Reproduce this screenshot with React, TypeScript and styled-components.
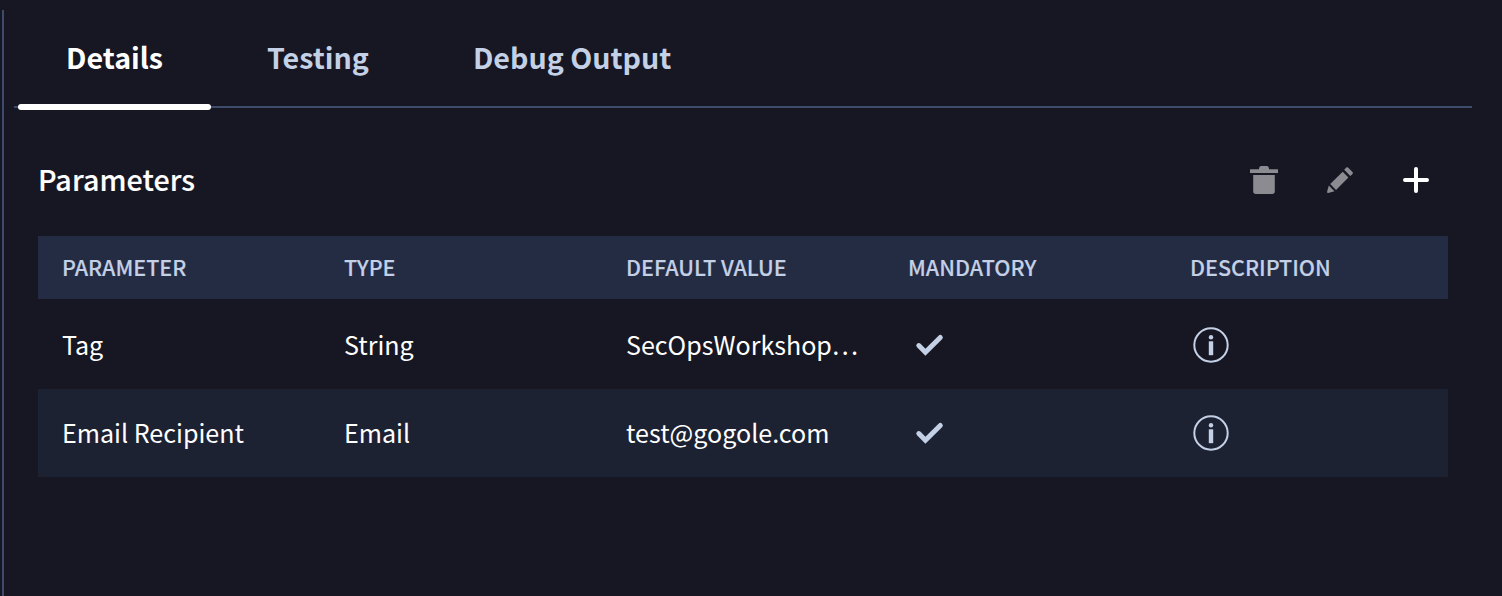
import React from "react";
import styled, { createGlobalStyle } from "styled-components";

const colors = {
  page: "#171723",
  line: "#3e4c6c",
  header: "#242c44",
  stripe: "#1d2233",
  muted: "#c3d0e5",
  text: "#ffffff",
  disabled: "#8b8b91",
};

const GlobalStyle = createGlobalStyle`
  * { box-sizing: border-box; }
  body {
    margin: 0;
    background: ${colors.page};
    color: ${colors.text};
    font-family: "Noto Sans CJK KR", "Noto Sans CJK SC", "Noto Sans", sans-serif;
  }
  button { font: inherit; color: inherit; background: none; border: 0; padding: 0; }
`;

const Panel = styled.main`
  height: 586px;
  margin: 10px 0 0 2px;
  border-left: 2px solid ${colors.line};
  padding: 0 30px 0 10px;
  overflow: hidden;
`;

const TabBar = styled.nav`
  display: flex;
  height: 98px;
  padding-left: 4px;
  border-bottom: 2px solid ${colors.line};
`;

const Tab = styled.button<{ $active?: boolean }>`
  position: relative;
  height: 96px;
  padding: 0 48px 2px;
  margin-right: 8px;
  font-size: 28.65px;
  font-weight: 700;
  line-height: 94px;
  white-space: nowrap;
  color: ${(p) => (p.$active ? colors.text : colors.muted)};
  &::after {
    content: "";
    display: ${(p) => (p.$active ? "block" : "none")};
    position: absolute;
    left: 0;
    right: 0;
    bottom: -4px;
    height: 6px;
    border-radius: 3px;
    background: ${colors.text};
  }
`;

const Section = styled.section`
  padding: 37px 24px 0;
`;

const SectionHead = styled.header`
  display: flex;
  align-items: center;
  justify-content: space-between;
  height: 70px;
  margin-bottom: 21px;
  padding-right: 16px;
`;

const Title = styled.h2`
  margin: 0;
  padding-bottom: 2px;
  font-size: 28.65px;
  font-weight: 500;
  letter-spacing: 0.08px;
  line-height: 68px;
  -webkit-text-stroke: 0.15px currentColor;
`;

const Actions = styled.div`
  display: flex;
  gap: 44px;
`;

const IconButton = styled.button<{ $disabled?: boolean }>`
  display: flex;
  width: 32px;
  height: 32px;
  color: ${(p) => (p.$disabled ? colors.disabled : colors.text)};
`;

const Table = styled.div`
  width: 1410px;
`;

const Row = styled.div<{ $striped?: boolean }>`
  display: grid;
  grid-template-columns: repeat(5, 282px);
  align-items: center;
  height: 88px;
  background: ${(p) => (p.$striped ? colors.stripe : "transparent")};
`;

const HeaderRow = styled(Row)`
  height: 63px;
  margin-bottom: 2px;
  background: ${colors.header};
`;

const HeaderCell = styled.div`
  padding: 0 0 2px 24px;
  font-size: 21.5px;
  font-weight: 500;
  line-height: 60px;
  white-space: nowrap;
  color: ${colors.muted};
  -webkit-text-stroke: 0.15px currentColor;
`;

const Cell = styled.div`
  display: flex;
  align-items: center;
  padding: 0 0 2px 24px;
  font-size: 25.07px;
  line-height: 86px;
  height: 88px;
  white-space: nowrap;
`;

const IconCell = styled(Cell)`
  padding-bottom: 0;
`;

const CellIcon = styled.svg`
  display: block;
  width: 42px;
  height: 42px;
  color: ${colors.muted};
`;

const TrashIcon = () => (
  <svg width="32" height="32" viewBox="0 0 32 32" fill="currentColor">
    <path d="M2 5.3h9V4.6Q11.2 2 13 2h6Q20.800 2 21 4.600V5.300h9V9H2Z" />
    <path d="M5.200 11h21.600v16.300q0 2.700-2.700 2.700H7.900q-2.700 0-2.700-2.700Z" />
  </svg>
);

const PencilIcon = () => (
  <svg width="32" height="32" viewBox="0 0 32 32" fill="currentColor">
    <path d="M20.200 5.800 22.200 3.600Q23.100 2.700 24 3.600L28.500 8.100Q29.400 9 28.500 9.900L26.300 12Z" />
    <path d="M18.700 7.700 24.400 13.500 12 25.900 6.200 20.100Z" />
    <path d="M4.800 21.600 10.500 27.200 4.200 28.900Q2.800 29.200 3.100 27.800Z" />
  </svg>
);

const PlusIcon = () => (
  <svg width="32" height="32" viewBox="0 0 32 32" stroke="currentColor" strokeWidth="4" strokeLinecap="round">
    <path d="M16 5v22M5 16h22" />
  </svg>
);

const CheckMark = () => (
  <CellIcon viewBox="0 0 42 42" fill="none" aria-label="Yes">
    <path d="M10.800 21.600 17.400 28.200 32.300 13.400" stroke="currentColor" strokeWidth="5" strokeLinecap="round" />
  </CellIcon>
);

const InfoMark = () => (
  <CellIcon viewBox="0 0 42 42" fill="none" aria-label="Information">
    <circle cx="21" cy="21" r="16.700" stroke="currentColor" strokeWidth="2" />
    <circle cx="21" cy="13.300" r="2.200" fill="currentColor" />
    <path d="M18.800 17.300h4.400v13.900h-4.400z" fill="currentColor" />
  </CellIcon>
);

const tabs = ["Details", "Testing", "Debug Output"];
const columns = ["PARAMETER", "TYPE", "DEFAULT VALUE", "MANDATORY", "DESCRIPTION"];
const parameters = [
  { name: "Tag", type: "String", value: "SecOpsWorkshop…" },
  { name: "Email Recipient", type: "Email", value: "test@gogole.com" },
];

export default function App() {
  return (
    <>
      <GlobalStyle />
      <Panel>
        <TabBar>
          {tabs.map((label, i) => (
            <Tab key={label} $active={i === 0}>{label}</Tab>
          ))}
        </TabBar>
        <Section>
          <SectionHead>
            <Title>Parameters</Title>
            <Actions>
              <IconButton $disabled aria-label="Delete"><TrashIcon /></IconButton>
              <IconButton $disabled aria-label="Edit"><PencilIcon /></IconButton>
              <IconButton aria-label="Add"><PlusIcon /></IconButton>
            </Actions>
          </SectionHead>
          <Table>
            <HeaderRow>
              {columns.map((c) => <HeaderCell key={c}>{c}</HeaderCell>)}
            </HeaderRow>
            {parameters.map((p, i) => (
              <Row key={p.name} $striped={i % 2 === 1}>
                <Cell>{p.name}</Cell>
                <Cell>{p.type}</Cell>
                <Cell>{p.value}</Cell>
                <IconCell><CheckMark /></IconCell>
                <IconCell><InfoMark /></IconCell>
              </Row>
            ))}
          </Table>
        </Section>
      </Panel>
    </>
  );
}
